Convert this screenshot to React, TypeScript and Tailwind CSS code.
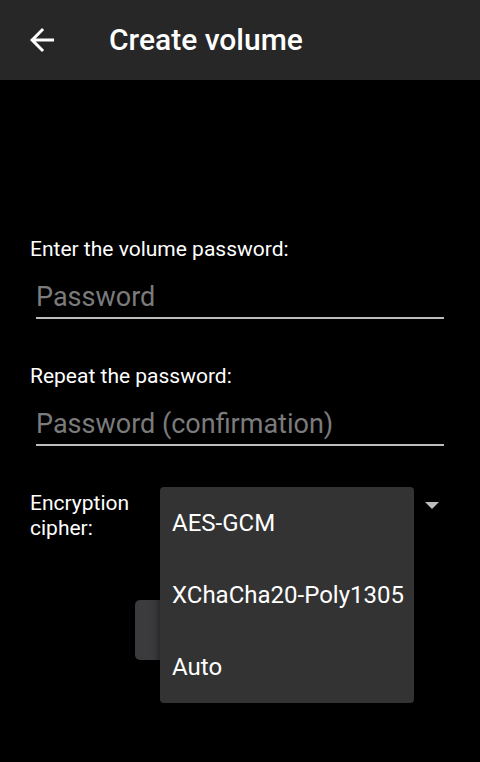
import React from 'react';

const ArrowBack: React.FC = () => (
  <svg width="36" height="36" viewBox="0 0 24 24" fill="#ffffff">
    <path d="M20 11H7.83l5.59-5.59L12 4l-8 8 8 8 1.41-1.41L7.83 13H20v-2z" />
  </svg>
);

const Field: React.FC<{ label: string; placeholder: string; className?: string }> = ({ label, placeholder, className }) => (
  <div className={className}>
    <div className="text-[21px] leading-[25px] text-white">{label}</div>
    <div className="mt-[19px] px-[6px]">
      <input
        type="password"
        placeholder={placeholder}
        className="block h-[32px] w-full bg-transparent text-[27px] leading-[32px] text-white outline-none placeholder:text-[#7b7b7b]"
      />
      <div className="mt-[4px] h-[2px] bg-[#bdbdbd]" />
    </div>
  </div>
);

const options = ['AES-GCM', 'XChaCha20-Poly1305', 'Auto'];

export default function App() {
  return (
    <div className="h-[762px] w-[480px] overflow-hidden bg-black font-['Roboto',sans-serif]">
      <header className="flex h-[80px] items-center bg-[#272727] pl-[24px]">
        <ArrowBack />
        <h1 className="ml-[49px] text-[30px] font-medium leading-none text-white">Create volume</h1>
      </header>

      <main className="px-[30px]">
        <Field label="Enter the volume password:" placeholder="Password" className="pt-[157px]" />
        <Field label="Repeat the password:" placeholder="Password (confirmation)" className="mt-[45px]" />

        <div className="mt-[45px] flex">
          <div className="w-[130px] text-[21px] leading-[25px] text-white">
            Encryption
            <br />
            cipher:
          </div>
          <div className="relative flex h-[50px] flex-1 justify-end pr-[11px] pt-[11px]">
            <svg width="14" height="7" viewBox="0 0 14 7">
              <path d="M0 0h14L7 7z" fill="#bdbdbd" />
            </svg>
            <ul className="absolute left-0 top-[-4px] z-10 w-[254px] rounded-[4px] bg-[#333333] shadow-[0_4px_10px_rgba(0,0,0,0.6)]">
              {options.map((o) => (
                <li key={o} className="flex h-[72px] items-center pl-[12px] text-[24px] text-white">
                  {o}
                </li>
              ))}
            </ul>
          </div>
        </div>

        <div className="mt-[59px] flex justify-center">
          <button className="h-[60px] w-[210px] rounded-[5px] bg-[#3b3b3d] text-[21px] font-medium text-white">
            CREATE
          </button>
        </div>
      </main>
    </div>
  );
}
